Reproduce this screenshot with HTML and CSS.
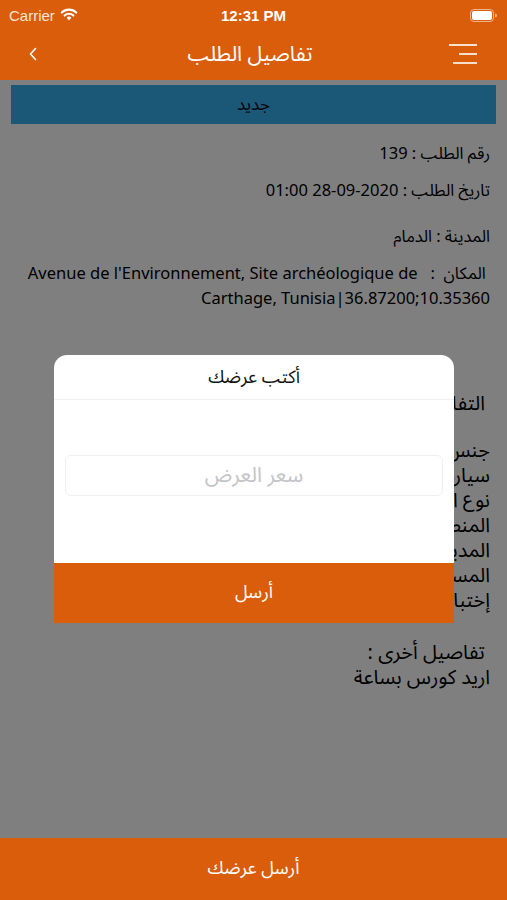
FILE: index.html
```html
<!DOCTYPE html>
<html lang="ar">
<head>
<meta charset="utf-8">
<title>تفاصيل الطلب</title>
<link rel="stylesheet" href="styles.css">
</head>
<body>
<div class="app">
  <header class="topbar">
    <div class="status">
      <div class="status-left">
        <span class="carrier">Carrier</span>
        <svg class="wifi" width="18" height="13" viewBox="0 0 18 13">
          <path d="M9 12.5 L6.6 9.8 A3.4 3.4 0 0 1 11.4 9.8 Z" fill="#fff"/>
          <path d="M4.6 7.6 A6.3 6.3 0 0 1 13.4 7.6" fill="none" stroke="#fff" stroke-width="2.1" stroke-linecap="round"/>
          <path d="M1.8 4.6 A10.3 10.3 0 0 1 16.2 4.6" fill="none" stroke="#fff" stroke-width="2.1" stroke-linecap="round"/>
        </svg>
      </div>
      <span class="time">12:31 PM</span>
      <div class="status-right">
        <svg class="battery" width="27" height="13" viewBox="0 0 27 13">
          <rect x="0.5" y="0.5" width="23" height="12" rx="3.5" fill="none" stroke="rgba(255,255,255,0.55)" stroke-width="1"/>
          <rect x="2" y="2" width="20" height="9" rx="2" fill="#fff"/>
          <path d="M25 4.5 A2 2 0 0 1 25 8.5 Z" fill="rgba(255,255,255,0.55)"/>
        </svg>
      </div>
    </div>
    <nav class="navbar">
      <svg class="back" width="10" height="16" viewBox="0 0 10 16">
        <polyline points="7.5,2.5 2.5,8 7.5,13.5" fill="none" stroke="#fff" stroke-width="1.6" stroke-linecap="round" stroke-linejoin="round"/>
      </svg>
      <h1 class="nav-title">تفاصيل الطلب</h1>
      <svg class="menu" width="30" height="22" viewBox="0 0 30 22">
        <line x1="1" y1="2" x2="29" y2="2" stroke="#fff" stroke-width="1.6"/>
        <line x1="11" y1="11" x2="29" y2="11" stroke="#fff" stroke-width="1.6"/>
        <line x1="5" y1="20" x2="29" y2="20" stroke="#fff" stroke-width="1.6"/>
      </svg>
    </nav>
  </header>

  <main class="content" dir="rtl">
    <div class="status-badge">جديد</div>
    <p class="row r1">رقم الطلب : 139</p>
    <p class="row r2">تاريخ الطلب : <bdi dir="ltr">01:00 28-09-2020</bdi></p>
    <p class="row r3">المدينة : الدمام</p>
    <p class="row r4">&nbsp;المكان&nbsp;&nbsp;:&nbsp;&nbsp; Avenue de l'Environnement, Site archéologique de Carthage, Tunisia|36.87200;10.35360</p>
    <p class="heading">التفاصيل</p>
    <ul class="details">
      <li>جنس المتدرب : ذكر</li>
      <li>سيارة التدريب : عادي</li>
      <li>نوع التدريب : قيادة</li>
      <li>المنطقة : الشرقية</li>
      <li>المدينة : الدمام</li>
      <li>المسافة : 10 كم</li>
      <li>إختبار القيادة : لا</li>
    </ul>
    <p class="other-title">&nbsp;تفاصيل أخرى :</p>
    <p class="other-text">اريد كورس بساعة</p>
  </main>

  <footer class="bottom-bar">أرسل عرضك</footer>

  <div class="scrim"></div>

  <section class="modal" dir="rtl">
    <div class="modal-title">أكتب عرضك</div>
    <div class="modal-body">
      <div class="field">سعر العرض</div>
    </div>
    <div class="modal-btn">أرسل</div>
  </section>
</div>
</body>
</html>
```

FILE: styles.css
```css
* { box-sizing: border-box; }
html, body { margin: 0; padding: 0; }
body {
  width: 507px;
  height: 900px;
  overflow: hidden;
  font-family: "Noto Sans", "Noto Sans Arabic UI", "Noto Sans Arabic", "DejaVu Sans", sans-serif;
  background: #fff;
}
.app {
  position: relative;
  width: 507px;
  height: 900px;
  display: flex;
  flex-direction: column;
}

/* top bar */
.topbar {
  background: #d95d0b;
  color: #fff;
  height: 80px;
  flex: none;
}
.status {
  height: 30px;
  display: flex;
  align-items: center;
  justify-content: space-between;
  padding: 0 9px 0 9px;
}
.status-left { display: flex; align-items: center; gap: 5px; width: 100px; }
.carrier {
  font-family: "Liberation Sans", "DejaVu Sans", sans-serif;
  font-size: 15px;
  color: #f5e4d8;
}
.wifi { margin-top: -2px; }
.time {
  font-family: "Liberation Sans", "DejaVu Sans", sans-serif;
  font-weight: bold;
  font-size: 15px;
  color: #fff;
}
.status-right { width: 100px; display: flex; justify-content: flex-end; padding-right: 1px; }

.navbar {
  height: 50px;
  display: flex;
  align-items: center;
  justify-content: space-between;
  padding: 0 28px 0 28px;
}
.back { margin-top: -2px; }
.nav-title {
  margin: -4px 0 0 14px;
  font-size: 21px;
  font-weight: normal;
  color: #fff;
}
.menu { margin-right: 1px; margin-top: -2px; }

/* content */
.content {
  flex: 1;
  padding: 5px 17px 0 17px;
  color: #000;
  font-size: 16.5px;
}
.status-badge {
  margin: 0 -6px;
  height: 39px;
  background: #36b0f0;
  color: #0a0a0a;
  display: flex;
  align-items: center;
  justify-content: center;
  font-size: 17px;
  padding-bottom: 2px;
}
.row { margin: 0; line-height: 25px; }
.r1 { margin-top: 16px; }
.r2 { margin-top: 12px; }
.r3 { margin-top: 21px; }
.r4 { margin-top: 12px; }
.heading { margin: 80px 5px 0 0; line-height: 25px; font-size: 20px; }
.details {
  list-style: none;
  margin: 22px 0 0 0;
  padding: 0;
  font-size: 20px;
  line-height: 25px;
}
.other-title { margin: 27px 0 0 0; font-size: 20px; line-height: 25px; }
.other-text { margin: 0; font-size: 20px; line-height: 25px; }

.bottom-bar {
  flex: none;
  height: 62px;
  background: #d95d0b;
  color: #fff;
  font-size: 18px;
  display: flex;
  align-items: center;
  justify-content: center;
  padding-bottom: 4px;
}

/* overlay */
.scrim {
  position: absolute;
  top: 80px;
  bottom: 62px;
  left: 0;
  right: 0;
  background: rgba(0, 0, 0, 0.5);
}
.modal {
  position: absolute;
  left: 54px;
  top: 355px;
  width: 400px;
  height: 268px;
  background: #fff;
  border-radius: 13px 13px 0 0;
  overflow: hidden;
  display: flex;
  flex-direction: column;
}
.modal-title {
  height: 45px;
  flex: none;
  display: flex;
  align-items: center;
  justify-content: center;
  font-size: 18px;
  color: #111;
  border-bottom: 1px solid #f2f2f2;
  padding-bottom: 3px;
}
.modal-body {
  flex: 1;
  padding: 55px 11px 0 11px;
}
.field {
  height: 41px;
  border: 1px solid #efefef;
  border-radius: 6px;
  display: flex;
  align-items: center;
  justify-content: center;
  color: #c4c4c8;
  font-size: 21px;
  padding-bottom: 4px;
}
.modal-btn {
  flex: none;
  height: 60px;
  background: #d95d0b;
  color: #fff;
  font-size: 18px;
  display: flex;
  align-items: center;
  justify-content: center;
  padding-bottom: 4px;
}
```
